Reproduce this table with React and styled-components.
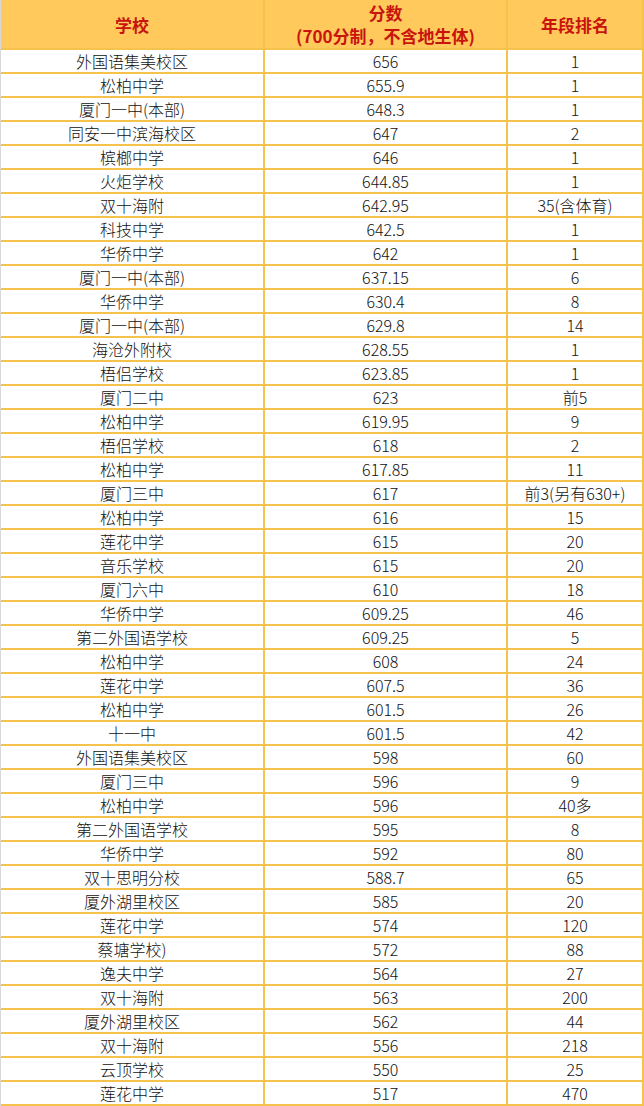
import React from "react";
import styled, { createGlobalStyle } from "styled-components";

const GlobalStyle = createGlobalStyle`
  html, body {
    margin: 0;
    padding: 0;
    background: #fff;
  }
`;

const rows = [
  ["外国语集美校区", "656", "1"],
  ["松柏中学", "655.9", "1"],
  ["厦门一中(本部)", "648.3", "1"],
  ["同安一中滨海校区", "647", "2"],
  ["槟榔中学", "646", "1"],
  ["火炬学校", "644.85", "1"],
  ["双十海附", "642.95", "35(含体育)"],
  ["科技中学", "642.5", "1"],
  ["华侨中学", "642", "1"],
  ["厦门一中(本部)", "637.15", "6"],
  ["华侨中学", "630.4", "8"],
  ["厦门一中(本部)", "629.8", "14"],
  ["海沧外附校", "628.55", "1"],
  ["梧侣学校", "623.85", "1"],
  ["厦门二中", "623", "前5"],
  ["松柏中学", "619.95", "9"],
  ["梧侣学校", "618", "2"],
  ["松柏中学", "617.85", "11"],
  ["厦门三中", "617", "前3(另有630+)"],
  ["松柏中学", "616", "15"],
  ["莲花中学", "615", "20"],
  ["音乐学校", "615", "20"],
  ["厦门六中", "610", "18"],
  ["华侨中学", "609.25", "46"],
  ["第二外国语学校", "609.25", "5"],
  ["松柏中学", "608", "24"],
  ["莲花中学", "607.5", "36"],
  ["松柏中学", "601.5", "26"],
  ["十一中", "601.5", "42"],
  ["外国语集美校区", "598", "60"],
  ["厦门三中", "596", "9"],
  ["松柏中学", "596", "40多"],
  ["第二外国语学校", "595", "8"],
  ["华侨中学", "592", "80"],
  ["双十思明分校", "588.7", "65"],
  ["厦外湖里校区", "585", "20"],
  ["莲花中学", "574", "120"],
  ["蔡塘学校)", "572", "88"],
  ["逸夫中学", "564", "27"],
  ["双十海附", "563", "200"],
  ["厦外湖里校区", "562", "44"],
  ["双十海附", "556", "218"],
  ["云顶学校", "550", "25"],
  ["莲花中学", "517", "470"],
];

const Wrap = styled.div`
  width: 644px;
  border-left: 1px solid #d8d8d8;
  box-sizing: border-box;
`;

const Table = styled.table`
  width: 642px;
  border-collapse: collapse;
  table-layout: fixed;
`;

const HeadCell = styled.th`
  height: 48px;
  padding: 0;
  background: #ffc95c;
  color: #c8140c;
  font-family: "Noto Sans CJK SC", "Liberation Serif", serif;
  font-weight: 700;
  font-size: 17px;
  line-height: 23px;
  text-align: center;
  border-bottom: 2px solid #f5c24c;
  border-right: 2px solid #f5c24c;
`;

const Cell = styled.td`
  height: 22px;
  padding: 0;
  color: #111;
  font-family: "Noto Sans CJK SC", "Noto Sans", sans-serif;
  font-weight: 300;
  font-size: 16px;
  line-height: 22px;
  text-align: center;
  white-space: nowrap;
  border-bottom: 2px solid #f5c24c;
  border-right: 2px solid #f5c24c;
`;

export default function App() {
  return (
    <>
      <GlobalStyle />
      <Wrap>
        <Table>
          <colgroup>
            <col style={{ width: 263 }} />
            <col style={{ width: 243 }} />
            <col style={{ width: 136 }} />
          </colgroup>
          <thead>
            <tr>
              <HeadCell>学校</HeadCell>
              <HeadCell>
                分数
                <br />
                (700分制，不含地生体)
              </HeadCell>
              <HeadCell>年段排名</HeadCell>
            </tr>
          </thead>
          <tbody>
            {rows.map((r, i) => (
              <tr key={i}>
                <Cell>{r[0]}</Cell>
                <Cell>{r[1]}</Cell>
                <Cell>{r[2]}</Cell>
              </tr>
            ))}
          </tbody>
        </Table>
      </Wrap>
    </>
  );
}
